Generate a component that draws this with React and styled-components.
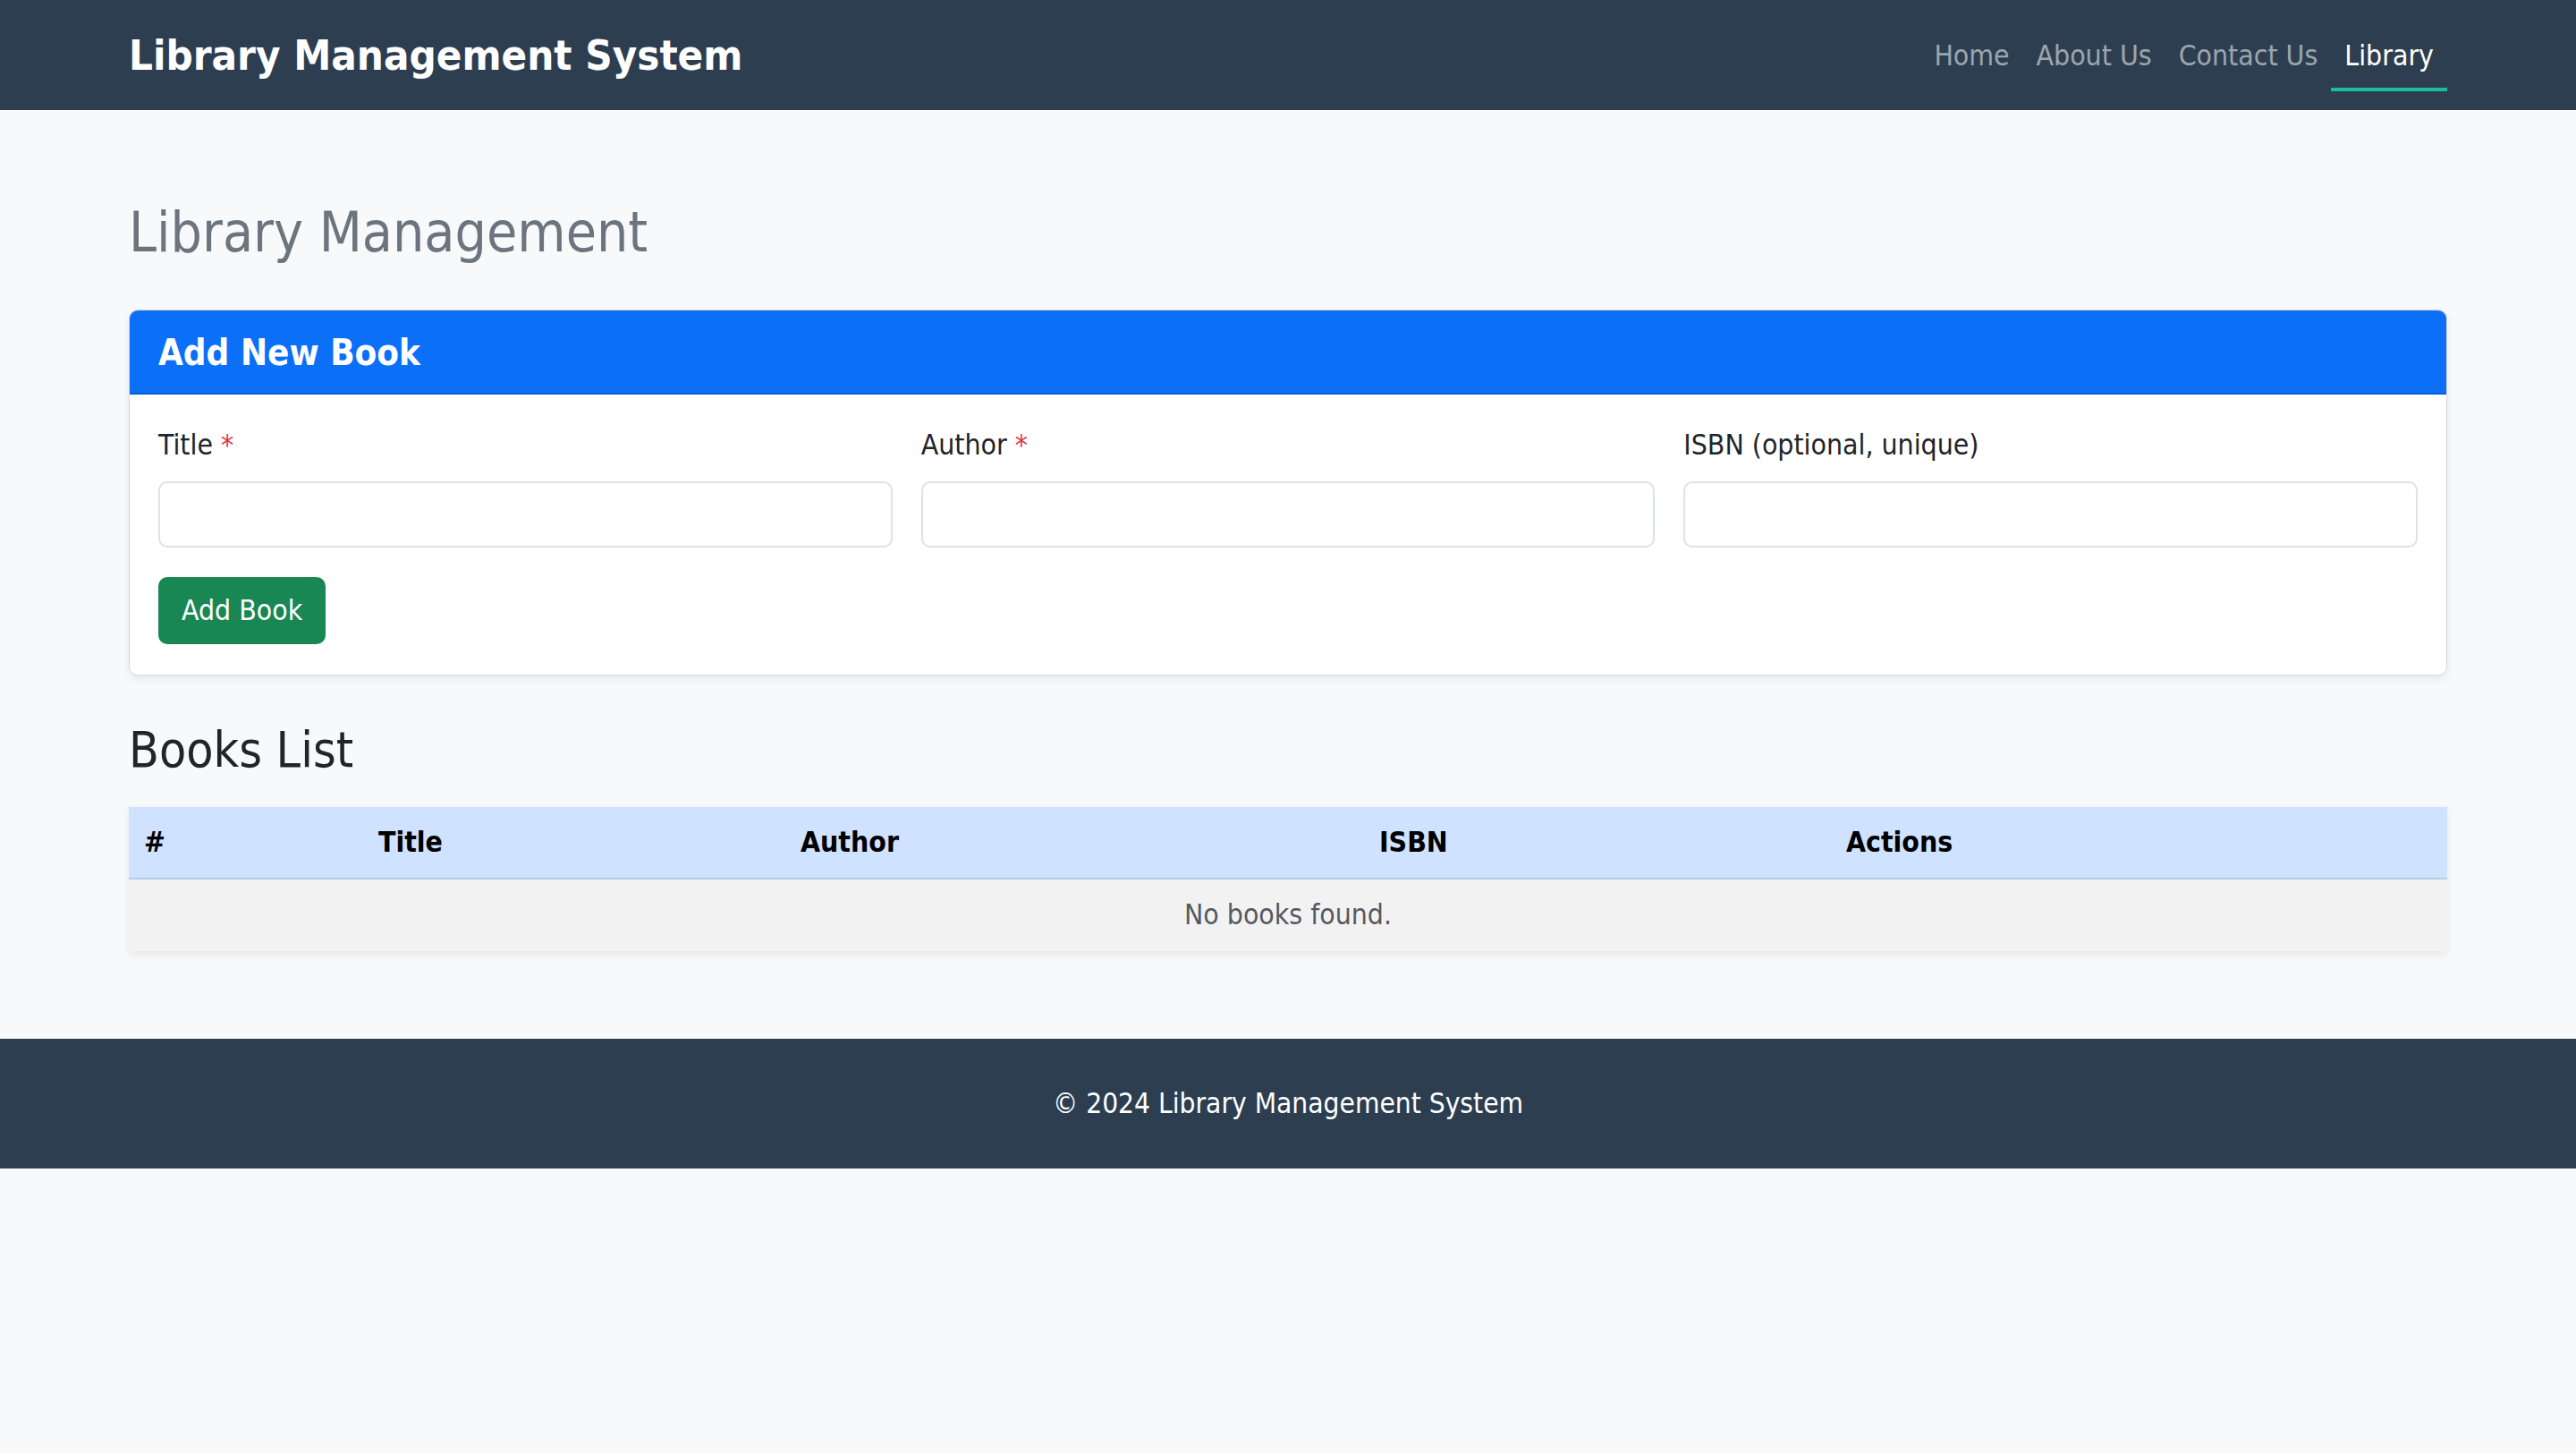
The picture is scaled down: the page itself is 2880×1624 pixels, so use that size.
import React from "react";
import styled, { createGlobalStyle } from "styled-components";

const GlobalStyle = createGlobalStyle`
  * { box-sizing: border-box; }
  html, body { margin: 0; padding: 0; }
  body {
    background: #f8f9fa;
    font-family: "DejaVu Sans Condensed", "DejaVu Sans", sans-serif;
    font-size: 31.7px;
    line-height: 1.5;
    color: #212529;
  }
`;

const Page = styled.div`
  min-height: 1624px;
  background: #f8f9fa;
`;

const Navbar = styled.nav`
  background: #2c3e50;
  height: 123px;
`;

const NavInner = styled.div`
  width: 2592px;
  margin: 0 auto;
  height: 100%;
  display: flex;
  align-items: center;
  justify-content: space-between;
`;

const Brand = styled.a`
  color: #ffffff;
  font-weight: 700;
  font-size: 47px;
  line-height: 1.5;
  text-decoration: none;
  padding-top: 2px;
`;

const NavList = styled.ul`
  list-style: none;
  margin: 0;
  padding: 0;
  display: flex;
  align-items: center;
`;

const NavLink = styled.a`
  display: block;
  padding: 18px 15px 11px;
  font-size: 31.7px;
  line-height: 1.5;
  text-decoration: none;
  color: ${(p) => (p.$active ? "#ffffff" : "rgba(255,255,255,0.55)")};
  border-bottom: 4px solid ${(p) => (p.$active ? "#1abc9c" : "transparent")};
`;

const Main = styled.main`
  width: 2592px;
  margin: 0 auto;
  padding: 100px 0 98px;
`;

const PageTitle = styled.h1`
  margin: 0 0 49px;
  font-size: 62px;
  font-weight: 400;
  line-height: 1.2;
  color: #6c757d;
`;

const Card = styled.section`
  background: #ffffff;
  border: 1px solid #d6d8db;
  border-radius: 10px;
  box-shadow: 0 4px 8px rgba(0, 0, 0, 0.075);
  overflow: hidden;
`;

const CardHeader = styled.div`
  background: #0b6ff7;
  border-bottom: 2px solid #0a5fd6;
  padding: 23px 32px 21px;
`;

const CardTitle = styled.h5`
  margin: 0;
  color: #ffffff;
  font-size: 40px;
  font-weight: 700;
  line-height: 1.2;
`;

const CardBody = styled.div`
  padding: 33px 32px 34px;
`;

const FieldRow = styled.div`
  display: grid;
  grid-template-columns: repeat(3, 1fr);
  gap: 32px;
`;

const Field = styled.div`
  display: flex;
  flex-direction: column;
`;

const Label = styled.label`
  font-size: 31.7px;
  line-height: 1.5;
  margin-bottom: 16px;
  color: #212529;
`;

const Required = styled.span`
  color: #dc3545;
`;

const Input = styled.input`
  height: 74px;
  border: 2px solid #dee2e6;
  border-radius: 10px;
  background: #ffffff;
  font-family: inherit;
  font-size: 31.7px;
  padding: 0 22px;
  outline: none;
`;

const Button = styled.button`
  margin-top: 33px;
  height: 75px;
  padding: 0 24px;
  background: #198754;
  border: 2px solid #198754;
  border-radius: 10px;
  color: #ffffff;
  font-family: inherit;
  font-size: 31.7px;
  line-height: 1.5;
  cursor: pointer;
`;

const SectionTitle = styled.h2`
  margin: 50px 0 31px;
  font-size: 55px;
  font-weight: 400;
  line-height: 1.2;
  color: #212529;
`;

const Table = styled.table`
  width: 100%;
  border-collapse: collapse;
  table-layout: fixed;
  box-shadow: 0 4px 8px rgba(0, 0, 0, 0.075);
`;

const Th = styled.th`
  background: #cfe2ff;
  color: #000000;
  font-weight: 700;
  text-align: left;
  font-size: 31.7px;
  line-height: 1.5;
  padding: 16px 16px 15.5px 17px;
  border-bottom: 2px solid #b8cbe6;
`;

const EmptyCell = styled.td`
  background: #f2f2f2;
  color: #555a5f;
  text-align: center;
  font-size: 31.7px;
  line-height: 1.5;
  padding: 16px 16px 16.5px;
`;

const Footer = styled.footer`
  background: #2c3e50;
  color: #ffffff;
  text-align: center;
  padding: 49px 0 48.5px;
  font-size: 31.4px;
  line-height: 1.5;
`;

const columns = [
  { label: "#", width: 262 },
  { label: "Title", width: 472 },
  { label: "Author", width: 647 },
  { label: "ISBN", width: 522 },
  { label: "Actions", width: null },
];

export default function App() {
  return (
    <Page>
      <GlobalStyle />
      <Navbar>
        <NavInner>
          <Brand href="#">Library Management System</Brand>
          <NavList>
            <li><NavLink href="#">Home</NavLink></li>
            <li><NavLink href="#">About Us</NavLink></li>
            <li><NavLink href="#">Contact Us</NavLink></li>
            <li><NavLink href="#" $active>Library</NavLink></li>
          </NavList>
        </NavInner>
      </Navbar>

      <Main>
        <PageTitle>Library Management</PageTitle>

        <Card>
          <CardHeader>
            <CardTitle>Add New Book</CardTitle>
          </CardHeader>
          <CardBody>
            <FieldRow>
              <Field>
                <Label>Title <Required>*</Required></Label>
                <Input type="text" />
              </Field>
              <Field>
                <Label>Author <Required>*</Required></Label>
                <Input type="text" />
              </Field>
              <Field>
                <Label>ISBN (optional, unique)</Label>
                <Input type="text" />
              </Field>
            </FieldRow>
            <Button type="button">Add Book</Button>
          </CardBody>
        </Card>

        <SectionTitle>Books List</SectionTitle>
        <Table>
          <colgroup>
            {columns.map((c) => (
              <col key={c.label} style={c.width ? { width: c.width } : undefined} />
            ))}
          </colgroup>
          <thead>
            <tr>
              {columns.map((c) => (
                <Th key={c.label}>{c.label}</Th>
              ))}
            </tr>
          </thead>
          <tbody>
            <tr>
              <EmptyCell colSpan={5}>No books found.</EmptyCell>
            </tr>
          </tbody>
        </Table>
      </Main>

      <Footer>© 2024 Library Management System</Footer>
    </Page>
  );
}
